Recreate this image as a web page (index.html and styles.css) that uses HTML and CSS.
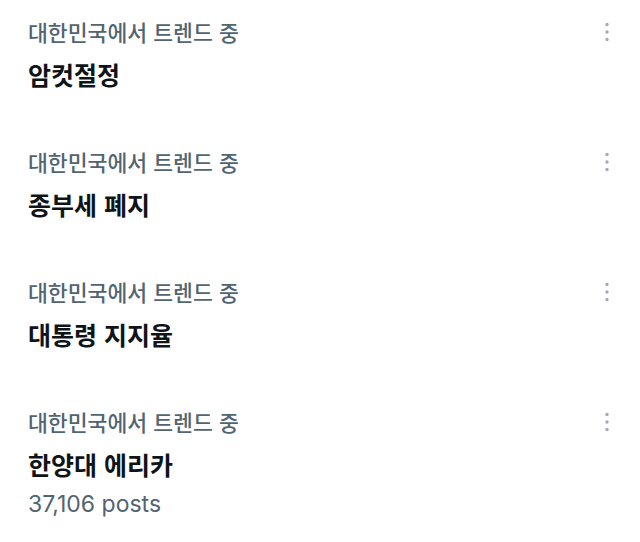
FILE: index.html
```html
<!DOCTYPE html>
<html lang="ko">
<head>
<meta charset="utf-8">
<link rel="stylesheet" href="styles.css">
</head>
<body>
<div class="trends">
  <div class="trend">
    <div class="trend-head">
      <span class="trend-context">대한민국에서 트렌드 중</span>
      <svg class="more" viewBox="0 0 6 20" width="6" height="20"><circle cx="3" cy="2.5" r="1.7"/><circle cx="3" cy="10" r="1.7"/><circle cx="3" cy="17.5" r="1.7"/></svg>
    </div>
    <div class="trend-title">암컷절정</div>
  </div>
  <div class="trend">
    <div class="trend-head">
      <span class="trend-context">대한민국에서 트렌드 중</span>
      <svg class="more" viewBox="0 0 6 20" width="6" height="20"><circle cx="3" cy="2.5" r="1.7"/><circle cx="3" cy="10" r="1.7"/><circle cx="3" cy="17.5" r="1.7"/></svg>
    </div>
    <div class="trend-title">종부세 폐지</div>
  </div>
  <div class="trend">
    <div class="trend-head">
      <span class="trend-context">대한민국에서 트렌드 중</span>
      <svg class="more" viewBox="0 0 6 20" width="6" height="20"><circle cx="3" cy="2.5" r="1.7"/><circle cx="3" cy="10" r="1.7"/><circle cx="3" cy="17.5" r="1.7"/></svg>
    </div>
    <div class="trend-title">대통령 지지율</div>
  </div>
  <div class="trend">
    <div class="trend-head">
      <span class="trend-context">대한민국에서 트렌드 중</span>
      <svg class="more" viewBox="0 0 6 20" width="6" height="20"><circle cx="3" cy="2.5" r="1.7"/><circle cx="3" cy="10" r="1.7"/><circle cx="3" cy="17.5" r="1.7"/></svg>
    </div>
    <div class="trend-title">한양대 에리카</div>
    <div class="trend-count">37,106 posts</div>
  </div>
</div>
</body>
</html>
```
FILE: styles.css
```css
html, body {
  margin: 0;
  padding: 0;
  background: #ffffff;
}
body {
  font-family: "Noto Sans CJK KR", "Noto Sans", sans-serif;
  width: 640px;
  height: 542px;
  overflow: hidden;
}
.trends {
  display: flex;
  flex-direction: column;
  padding: 0 30px 0 28px;
}
.trend {
  height: 130px;
  box-sizing: border-box;
  padding-top: 18px;
  display: flex;
  flex-direction: column;
}
.trend-head {
  display: flex;
  align-items: flex-start;
  justify-content: space-between;
  height: 28px;
}
.trend-context {
  font-size: 21.6px;
  line-height: 28px;
  font-weight: 500;
  color: #536471;
}
.more {
  fill: #a3acb3;
  margin-top: 4px;
}
.trend-title {
  margin-top: 13px;
  font-size: 25px;
  line-height: 30px;
  font-weight: 700;
  color: #0f1419;
}
.trend-count {
  margin-top: 10px;
  font-family: "Inter", "Noto Sans", sans-serif;
  font-size: 23px;
  line-height: 30px;
  color: #536471;
}
```
